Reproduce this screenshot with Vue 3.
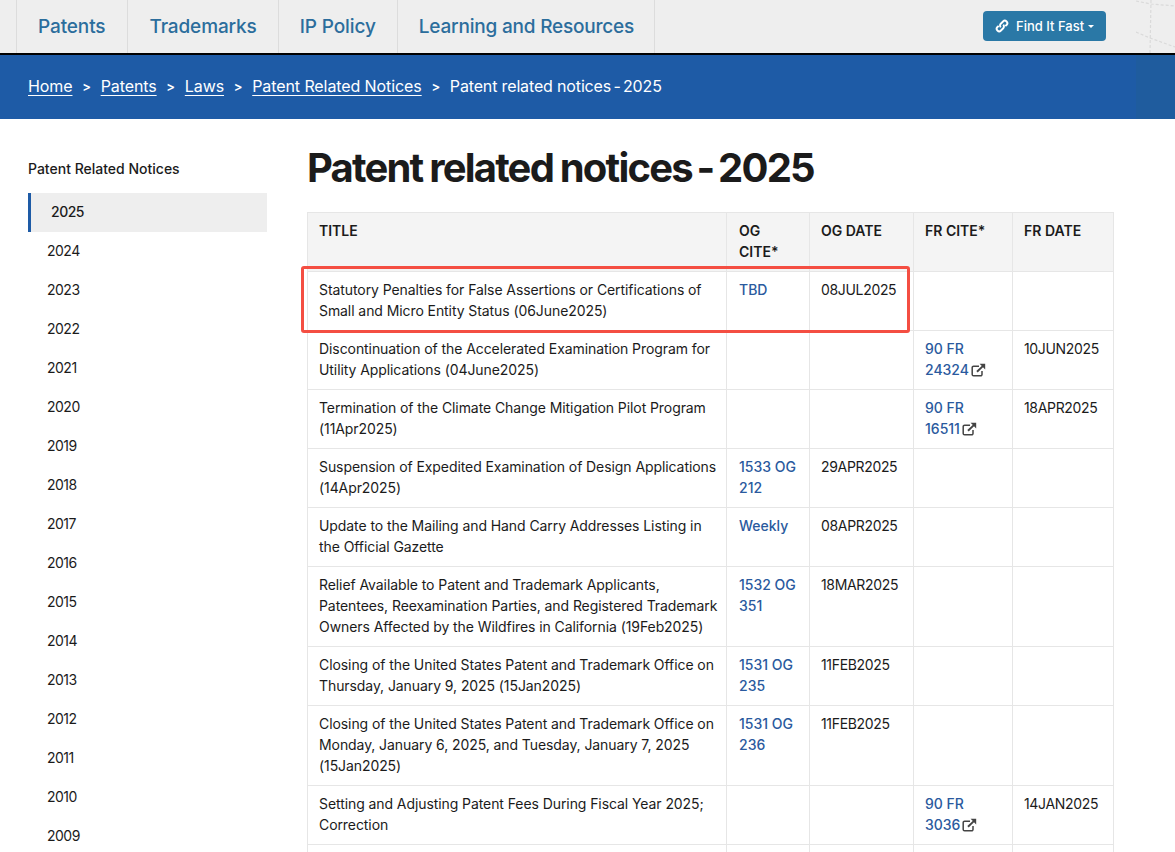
<script setup>
const navItems = ['Patents', 'Trademarks', 'IP Policy', 'Learning and Resources']
const crumbs = ['Home', 'Patents', 'Laws', 'Patent Related Notices']
const years = []
for (let y = 2024; y >= 2009; y--) years.push(y)
const rows = [
  { t: ['Statutory Penalties for False Assertions or Certifications of', 'Small and Micro Entity Status (06June2025)'], og: ['TBD'], d: '08JUL2025' },
  { t: ['Discontinuation of the Accelerated Examination Program for', 'Utility Applications (04June2025)'], fr: ['90 FR', '24324'], fd: '10JUN2025' },
  { t: ['Termination of the Climate Change Mitigation Pilot Program', '(11Apr2025)'], fr: ['90 FR', '16511'], fd: '18APR2025' },
  { t: ['Suspension of Expedited Examination of Design Applications', '(14Apr2025)'], og: ['1533 OG', '212'], d: '29APR2025' },
  { t: ['Update to the Mailing and Hand Carry Addresses Listing in', 'the Official Gazette'], og: ['Weekly'], d: '08APR2025' },
  { t: ['Relief Available to Patent and Trademark Applicants,', 'Patentees, Reexamination Parties, and Registered Trademark', 'Owners Affected by the Wildfires in California (19Feb2025)'], og: ['1532 OG', '351'], d: '18MAR2025' },
  { t: ['Closing of the United States Patent and Trademark Office on', 'Thursday, January 9, 2025 (15Jan2025)'], og: ['1531 OG', '235'], d: '11FEB2025' },
  { t: ['Closing of the United States Patent and Trademark Office on', 'Monday, January 6, 2025, and Tuesday, January 7, 2025', '(15Jan2025)'], og: ['1531 OG', '236'], d: '11FEB2025' },
  { t: ['Setting and Adjusting Patent Fees During Fiscal Year 2025;', 'Correction'], fr: ['90 FR', '3036'], fd: '14JAN2025' }
]
</script>

<template>
  <div class="page">
    <header class="topnav">
      <nav class="navlist">
        <a v-for="n in navItems" :key="n" class="navitem">{{ n }}</a>
      </nav>
      <button class="fast">
        <svg class="linkicon" viewBox="0 0 16 16" width="14" height="14" fill="none" stroke="#fff" stroke-width="2.2">
          <path d="M6.6 9.4a2.8 2.8 0 0 1 0-4l2.6-2.6a2.8 2.8 0 0 1 4 4L11.8 8.2" />
          <path d="M9.4 6.6a2.8 2.8 0 0 1 0 4l-2.6 2.6a2.8 2.8 0 0 1-4-4L4.2 7.8" />
        </svg>
        <span>Find It Fast</span>
        <i class="caret"></i>
      </button>
      <svg class="mapbit" viewBox="0 0 39 53" width="39" height="53" fill="none" stroke="#dadada" stroke-width="1.2" stroke-dasharray="3 2">
        <path d="M0 1 L15 4 L39 6" />
        <path d="M15 0 L14 53" />
        <path d="M0 32 L14 38 L39 47" />
      </svg>
    </header>

    <div class="crumbbar">
      <template v-for="c in crumbs" :key="c">
        <a class="crumb">{{ c }}</a>
        <span class="sep">&gt;</span>
      </template>
      <span class="current">Patent related notices <span class="dash">-</span> 2025</span>
      <div class="tint"></div>
    </div>

    <main class="content">
      <aside class="side">
        <div class="sidetitle">Patent Related Notices</div>
        <div class="year active">2025</div>
        <div v-for="y in years" :key="y" class="year">{{ y }}</div>
      </aside>

      <section class="body">
        <h1>Patent related notices <span class="hdash">-</span> 2025</h1>
        <div class="tablewrap">
          <table>
            <colgroup>
              <col class="c1" /><col class="c2" /><col class="c3" /><col class="c4" /><col class="c5" />
            </colgroup>
            <thead>
              <tr>
                <th>TITLE</th>
                <th>OG<br />CITE*</th>
                <th>OG DATE</th>
                <th>FR CITE*</th>
                <th>FR DATE</th>
              </tr>
            </thead>
            <tbody>
              <tr v-for="r in rows" :key="r.t[0] + r.t[1]">
                <td class="title"><span v-for="l in r.t" :key="l" class="line">{{ l }}</span></td>
                <td><a v-for="l in r.og" :key="l" class="line lnk">{{ l }}</a></td>
                <td class="date">{{ r.d }}</td>
                <td>
                  <template v-if="r.fr">
                    <a class="line lnk">{{ r.fr[0] }}</a>
                    <a class="line lnk">{{ r.fr[1] }}<svg class="ext" viewBox="0 0 15 14" width="15" height="14" fill="none" stroke="#444" stroke-width="1.5"><path d="M11 8v3.4a1.4 1.4 0 0 1-1.4 1.4H2.6a1.4 1.4 0 0 1-1.4-1.4V4.6a1.4 1.4 0 0 1 1.4-1.4H8" /><path d="M6 8.8 12.4 2.6" stroke-width="1.9" /><path d="M8.6 0.8h5.6v5.6z" fill="#444" stroke="none" /></svg></a>
                  </template>
                </td>
                <td class="date">{{ r.fd }}</td>
              </tr>
              <tr class="blank"><td></td><td></td><td></td><td></td><td></td></tr>
            </tbody>
          </table>
          <div class="mark"></div>
        </div>
      </section>
    </main>
  </div>
</template>

<style scoped>
.page {
  height: 852px;
  overflow: hidden;
  background: #fff;
  font-family: Inter, "Liberation Sans", sans-serif;
  font-size: 14px;
  line-height: 21px;
  color: #1b1b1b;
}
.topnav {
  position: relative;
  height: 53px;
  background: #eeeeee;
  border-bottom: 2px solid #000;
  display: flex;
  justify-content: space-between;
  padding: 0 69px 0 16px;
}
.navlist { display: flex; }
.navitem {
  display: flex;
  align-items: center;
  padding: 0 21px;
  border-left: 1px solid #dcdcdc;
  font-size: 19px;
  font-weight: 500;
  letter-spacing: -0.12px;
  color: #2b6d9c;
}
.navitem:first-child { padding-right: 22px; }
.navitem:last-child { border-right: 1px solid #dcdcdc; padding-right: 20px; letter-spacing: -0.2px; }
.fast {
  align-self: flex-start;
  margin-top: 11px;
  height: 30px;
  width: 123px;
  box-sizing: border-box;
  padding: 0 0 0 12px;
  display: flex;
  align-items: center;
  gap: 7px;
  border: 0;
  border-radius: 4px;
  background: #2a78a6;
  color: #fff;
  font: 500 13px Inter, sans-serif;
}
.linkicon { flex: none; }
.caret {
  border-top: 3px solid #fff;
  border-left: 3px solid transparent;
  border-right: 3px solid transparent;
  margin-left: -3px;
}
.mapbit { position: absolute; right: 0; top: 0; }
.crumbbar {
  position: relative;
  height: 64px;
  box-sizing: border-box;
  padding: 0 0 2px 28px;
  background: #1e5ba6;
  display: flex;
  align-items: center;
  color: #fff;
  font-size: 16px;
}
.crumb { text-decoration: underline; text-underline-offset: 3px; letter-spacing: -0.09px; }
.sep { margin: 0 7.6px; width: 13px; text-align: center; font-size: 13px; font-weight: 600; }
.current { letter-spacing: -0.15px; }
.dash { margin: 0 -2px; }
.tint {
  position: absolute;
  right: 0;
  top: 0;
  bottom: 0;
  width: 39px;
  background: #1f5c9e;
}
.content { display: flex; padding: 0 0 0 28px; }
.side { width: 239px; flex: none; padding-top: 39px; }
.sidetitle { height: 35px; font-weight: 500; }
.year {
  height: 39px;
  line-height: 37px;
  padding-left: 19px;
  letter-spacing: -0.5px;
}
.year.active {
  background: #eeeeee;
  border-left: 3px solid #1e5ba6;
  padding-left: 20px;
  font-weight: 500;
}
.body { margin-left: 40px; width: 806px; flex: none; }
h1 {
  margin: 24px 0 20px;
  font-size: 40px;
  line-height: 49px;
  font-weight: 700;
  letter-spacing: -1.8px;
  word-spacing: -1px;
  color: #1b1b1b;
}
.hdash { margin: 0 -2px; }
.tablewrap { position: relative; }
table {
  width: 806px;
  table-layout: fixed;
  border-collapse: collapse;
}
.c1 { width: 419px; }
.c2 { width: 83px; }
.c3 { width: 104px; }
.c4 { width: 99px; }
.c5 { width: 101px; }
th, td {
  border: 1px solid #e6e6e6;
  padding: 7px 11px 9px;
  vertical-align: top;
  text-align: left;
  white-space: nowrap;
}
th:nth-child(2), td:nth-child(2) { padding-left: 12px; }
th { background: #f4f4f4; font-weight: 600; height: 42px; }
.title { letter-spacing: -0.08px; }
.date { letter-spacing: -0.33px; }
.blank td { height: 42px; }
.line { display: block; }
.lnk { color: #2a5a9e; font-weight: 500; }
.ext { vertical-align: -2px; margin-left: 2px; }
.mark {
  position: absolute;
  left: -6px;
  top: 54px;
  width: 609px;
  height: 67px;
  box-sizing: border-box;
  border: 3px solid #f44e42;
  border-radius: 3px;
}
</style>
